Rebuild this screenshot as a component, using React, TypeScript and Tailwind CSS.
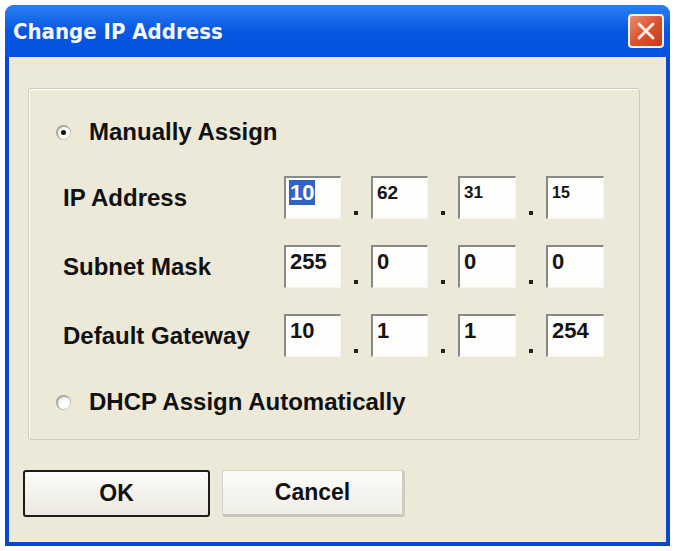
import React from "react";

const FONT = { fontFamily: '"Liberation Sans", Arial, sans-serif' };

type Field = { value: string; size?: string; selected?: boolean };

const ROWS: { label: string; fields: Field[] }[] = [
  {
    label: "IP Address",
    fields: [
      { value: "10", selected: true },
      { value: "62", size: "text-[19px]" },
      { value: "31", size: "text-[17px]" },
      { value: "15", size: "text-[16px]" },
    ],
  },
  {
    label: "Subnet Mask",
    fields: [{ value: "255" }, { value: "0" }, { value: "0" }, { value: "0" }],
  },
  {
    label: "Default Gateway",
    fields: [{ value: "10" }, { value: "1" }, { value: "1" }, { value: "254" }],
  },
];

function Radio({ checked }: { checked?: boolean }) {
  return (
    <span className="relative flex size-[15px] items-center justify-center rounded-full border border-[#c9c9bd] bg-gradient-to-br from-[#d8d8d0] via-white to-white">
      <span className="absolute left-[-1px] top-[-1px] size-[15px] rounded-full border-l-2 border-t-2 border-[#8a8a82] opacity-60" />
      {checked && <span className="size-[5px] rounded-full bg-[#111]" />}
    </span>
  );
}

function IpBox({ field, width }: { field: Field; width: string }) {
  return (
    <div
      className={`${width} h-[43px] shrink-0 border-l-2 border-t-2 border-[#8a8a85] border-r border-b border-r-[#f4f4f0] border-b-[#f4f4f0] bg-[#fdfdfb] pl-[3px] pt-[2px]`}
    >
      <span
        className={`inline-block px-[1px] font-bold leading-[25px] ${field.size ?? "text-[22px]"} ${
          field.selected ? "bg-[#3163c5] text-white" : "text-[#151515]"
        }`}
      >
        {field.value}
      </span>
    </div>
  );
}

function Dot() {
  return (
    <div className="flex h-[43px] w-[30px] shrink-0 items-end justify-center pb-[4px]">
      <span className="size-[4px] bg-[#222]" />
    </div>
  );
}

export default function App() {
  return (
    <div className="h-[551px] w-[674px] bg-white p-[5px] pr-[4px]" style={FONT}>
      <div className="flex h-[541px] w-[665px] flex-col overflow-hidden rounded-t-[9px] bg-[#0847d0]">
        {/* title bar */}
        <div className="flex h-[52px] shrink-0 items-center justify-between bg-gradient-to-b from-[#2a80f2] via-[#0856e2] to-[#0452df] pl-[8px] pr-[6px]">
          <span
            className="text-[22px] font-bold text-[#f4f8ff]"
            style={{ fontFamily: '"DejaVu Sans Condensed", "DejaVu Sans", sans-serif' }}
          >
            Change IP Address
          </span>
          <div className="flex h-[34px] w-[36px] items-center justify-center rounded-[4px] border-2 border-[#f3f0f0] bg-gradient-to-br from-[#e98a6a] via-[#d9542f] to-[#c13c18]">
            <svg width="22" height="22" viewBox="0 0 22 22">
              <path
                d="M4 4 L18 18 M18 4 L4 18"
                stroke="#fbe9e2"
                strokeWidth="3"
                strokeLinecap="round"
              />
            </svg>
          </div>
        </div>

        {/* body */}
        <div className="mx-[4px] mb-[4px] flex flex-1 flex-col bg-[#ece9d8] pl-[14px] pt-[31px]">
          <div className="ml-[5px] flex w-[612px] flex-col rounded-[3px] border border-[#cfcdbf] pb-[22px] pt-[28px] shadow-[inset_1px_1px_0_#fff]">
            <div className="flex h-[30px] items-center pl-[27px]">
              <Radio checked />
              <span className="ml-[18px] text-[24px] font-bold text-[#111]">Manually Assign</span>
            </div>

            <div className="mt-[29px] flex flex-col gap-[26px]">
              {ROWS.map((row) => (
                <div key={row.label} className="flex items-center">
                  <span className="w-[255px] shrink-0 pl-[34px] text-[24px] font-bold text-[#111]">
                    {row.label}
                  </span>
                  <div className="flex">
                    <IpBox field={row.fields[0]} width="w-[57px]" />
                    <Dot />
                    <IpBox field={row.fields[1]} width="w-[57px]" />
                    <Dot />
                    <IpBox field={row.fields[2]} width="w-[58px]" />
                    <Dot />
                    <IpBox field={row.fields[3]} width="w-[58px]" />
                  </div>
                </div>
              ))}
            </div>

            <div className="mt-[30px] flex h-[30px] items-center pl-[27px]">
              <Radio />
              <span className="ml-[18px] text-[24px] font-bold text-[#111]">
                DHCP Assign Automatically
              </span>
            </div>
          </div>

          <div className="mt-[30px] flex gap-[12px]">
            <button className="flex h-[47px] w-[187px] items-center justify-center rounded-[3px] border-2 border-[#1c1c1c] bg-gradient-to-b from-[#fbfbf8] to-[#ebe9e0] text-[23px] font-bold text-[#111]">
              OK
            </button>
            <button className="flex h-[47px] w-[183px] items-center justify-center rounded-[3px] border border-[#d4d2c8] border-b-[3px] border-r-[3px] border-b-[#c9c6b8] border-r-[#cfccbf] bg-gradient-to-b from-[#fcfcfa] to-[#efeee6] text-[23px] font-bold text-[#111]">
              Cancel
            </button>
          </div>
        </div>
      </div>
    </div>
  );
}
